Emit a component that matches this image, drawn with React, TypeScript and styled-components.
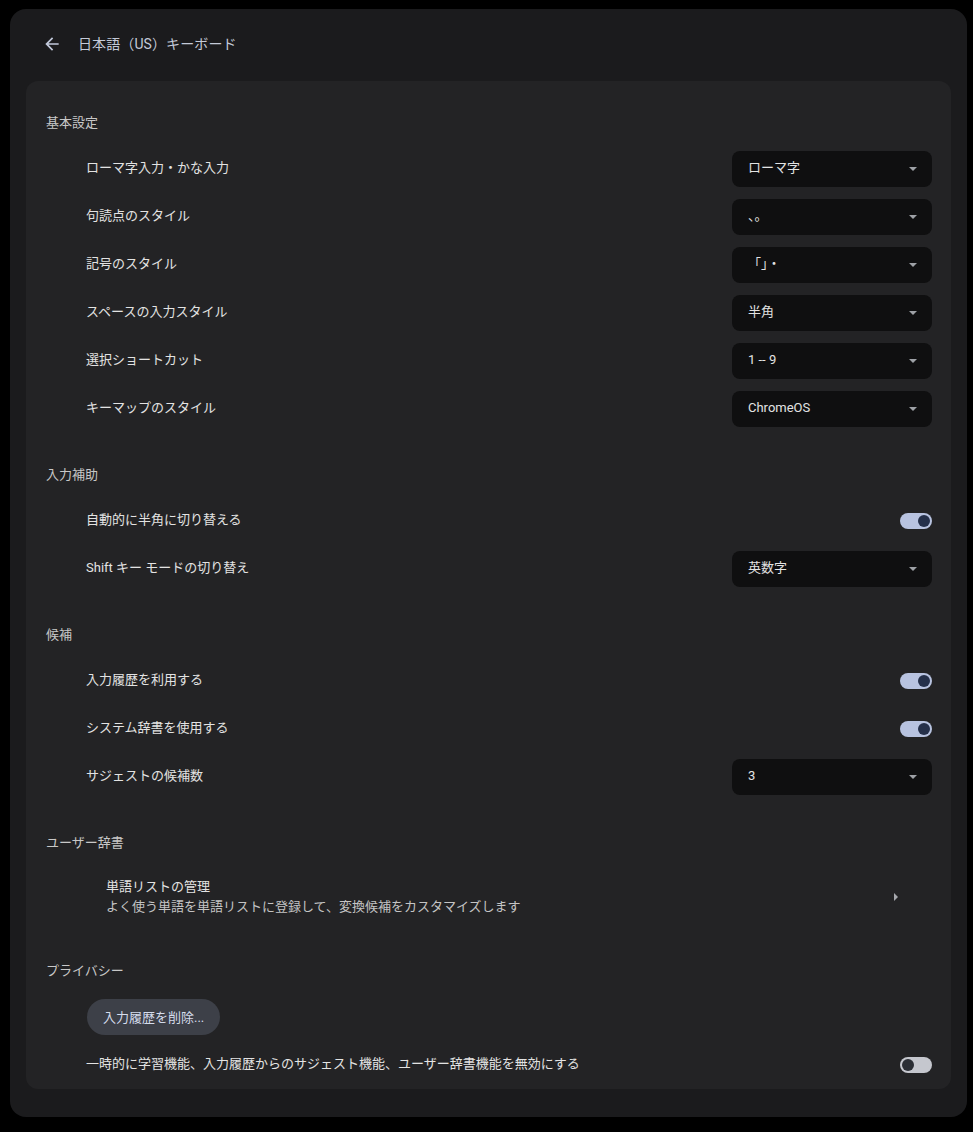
import styled, { createGlobalStyle } from "styled-components";

const GlobalStyle = createGlobalStyle`
  html, body {
    margin: 0;
    padding: 0;
    background: #000;
  }
  body {
    font-family: Roboto, "Noto Sans CJK JP", sans-serif;
    font-variant-ligatures: none;
    -webkit-font-smoothing: antialiased;
  }
`;

const Panel = styled.div`
  margin: 9px 6px 16px 10px;
  background: #1b1b1d;
  border-radius: 16px;
  padding: 0 16px 28px 16px;
`;

const Header = styled.div`
  height: 72px;
  box-sizing: border-box;
  padding: 0 0 2px 16px;
  display: flex;
  align-items: center;
  gap: 16px;
`;

const BackButton = styled.button`
  width: 20px;
  height: 20px;
  padding: 0;
  border: none;
  background: none;
  color: #c2c9db;
  display: flex;
  align-items: center;
  justify-content: center;
`;

const Title = styled.h1`
  margin: 0;
  font-size: 14px;
  font-weight: 400;
  line-height: 20px;
  color: #c4cad8;
  letter-spacing: 0.1px;
`;

const Card = styled.div`
  background: #232325;
  border-radius: 12px;
  padding: 0 19px 0 20px;
`;

const SectionTitle = styled.h2`
  margin: 0;
  font-size: 13px;
  font-weight: 400;
  color: #c8c8c8;
  line-height: 20px;
  padding: 32px 0 12px;
`;

const Row = styled.div<{ $indent?: number; $height?: number }>`
  display: flex;
  align-items: center;
  justify-content: space-between;
  height: ${(p) => p.$height ?? 48}px;
  padding-left: ${(p) => p.$indent ?? 40}px;
`;

const Label = styled.span`
  font-size: 13px;
  line-height: 20px;
  margin-top: -2px;
  color: #e3e3e3;
`;

const LinkText = styled.div`
  display: flex;
  flex-direction: column;
  font-size: 13px;
  line-height: 20px;
  color: #e3e3e3;
`;

const SubLabel = styled.span`
  color: #c4c4c4;
`;

const Select = styled.div`
  width: 200px;
  height: 36px;
  box-sizing: border-box;
  border-radius: 8px;
  background: #0f0f10;
  display: flex;
  align-items: center;
  justify-content: space-between;
  padding: 0 16px;
  font-size: 13px;
  color: #e3e3e3;
`;

const SelectValue = styled.span`
  line-height: 20px;
  margin-top: -2px;
`;

const Caret = styled.span`
  width: 0;
  height: 0;
  border-left: 4px solid transparent;
  border-right: 4px solid transparent;
  border-top: 4px solid #9ea1a6;
  margin-right: -1px;
`;

const RightCaret = styled.span`
  width: 0;
  height: 0;
  border-top: 4px solid transparent;
  border-bottom: 4px solid transparent;
  border-left: 4px solid #a6a8ad;
  margin-right: 34px;
`;

const Toggle = styled.div<{ $on: boolean }>`
  width: 32px;
  height: 16px;
  border-radius: 8px;
  background: ${(p) => (p.$on ? "#b8c3e0" : "#c5c7ce")};
  display: flex;
  align-items: center;
  justify-content: ${(p) => (p.$on ? "flex-end" : "flex-start")};
  padding: 0 2px;
  box-sizing: border-box;
`;

const Knob = styled.span<{ $on: boolean }>`
  width: 12px;
  height: 12px;
  border-radius: 50%;
  background: ${(p) => (p.$on ? "#25304a" : "#2b2e35")};
`;

const PillButton = styled.button`
  height: 36px;
  padding: 0 16px 2px;
  border: none;
  border-radius: 18px;
  background: #3d4048;
  color: #d5dcec;
  font-family: inherit;
  font-size: 13px;
  margin-left: 1px;
`;

const BackIcon = () => (
  <svg width="20" height="20" viewBox="0 0 24 24" fill="currentColor">
    <path d="M20 11H7.83l5.59-5.59L12 4l-8 8 8 8 1.41-1.41L7.83 13H20v-2z" />
  </svg>
);

type Item =
  | { kind: "select"; label: string; value: string }
  | { kind: "toggle"; label: string; on: boolean };

const sections: { title: string; items: Item[] }[] = [
  {
    title: "基本設定",
    items: [
      { kind: "select", label: "ローマ字入力・かな入力", value: "ローマ字" },
      { kind: "select", label: "句読点のスタイル", value: "、。" },
      { kind: "select", label: "記号のスタイル", value: "「」・" },
      { kind: "select", label: "スペースの入力スタイル", value: "半角" },
      { kind: "select", label: "選択ショートカット", value: "1 -- 9" },
      { kind: "select", label: "キーマップのスタイル", value: "ChromeOS" },
    ],
  },
  {
    title: "入力補助",
    items: [
      { kind: "toggle", label: "自動的に半角に切り替える", on: true },
      { kind: "select", label: "Shift キー モードの切り替え", value: "英数字" },
    ],
  },
  {
    title: "候補",
    items: [
      { kind: "toggle", label: "入力履歴を利用する", on: true },
      { kind: "toggle", label: "システム辞書を使用する", on: true },
      { kind: "select", label: "サジェストの候補数", value: "3" },
    ],
  },
];

function App() {
  return (
    <>
      <GlobalStyle />
      <Panel>
        <Header>
          <BackButton>
            <BackIcon />
          </BackButton>
          <Title>日本語（US）キーボード</Title>
        </Header>
        <Card>
          {sections.map((section) => (
            <div key={section.title}>
              <SectionTitle>{section.title}</SectionTitle>
              {section.items.map((item) => (
                <Row key={item.label}>
                  <Label>{item.label}</Label>
                  {item.kind === "select" ? (
                    <Select>
                      <SelectValue>{item.value}</SelectValue>
                      <Caret />
                    </Select>
                  ) : (
                    <Toggle $on={item.on}>
                      <Knob $on={item.on} />
                    </Toggle>
                  )}
                </Row>
              ))}
            </div>
          ))}
          <SectionTitle>ユーザー辞書</SectionTitle>
          <Row $indent={60} $height={64}>
            <LinkText>
              <span>単語リストの管理</span>
              <SubLabel>よく使う単語を単語リストに登録して、変換候補をカスタマイズします</SubLabel>
            </LinkText>
            <RightCaret />
          </Row>
          <SectionTitle>プライバシー</SectionTitle>
          <Row>
            <PillButton>入力履歴を削除...</PillButton>
          </Row>
          <Row>
            <Label>一時的に学習機能、入力履歴からのサジェスト機能、ユーザー辞書機能を無効にする</Label>
            <Toggle $on={false}>
              <Knob $on={false} />
            </Toggle>
          </Row>
        </Card>
      </Panel>
    </>
  );
}

export default App;
